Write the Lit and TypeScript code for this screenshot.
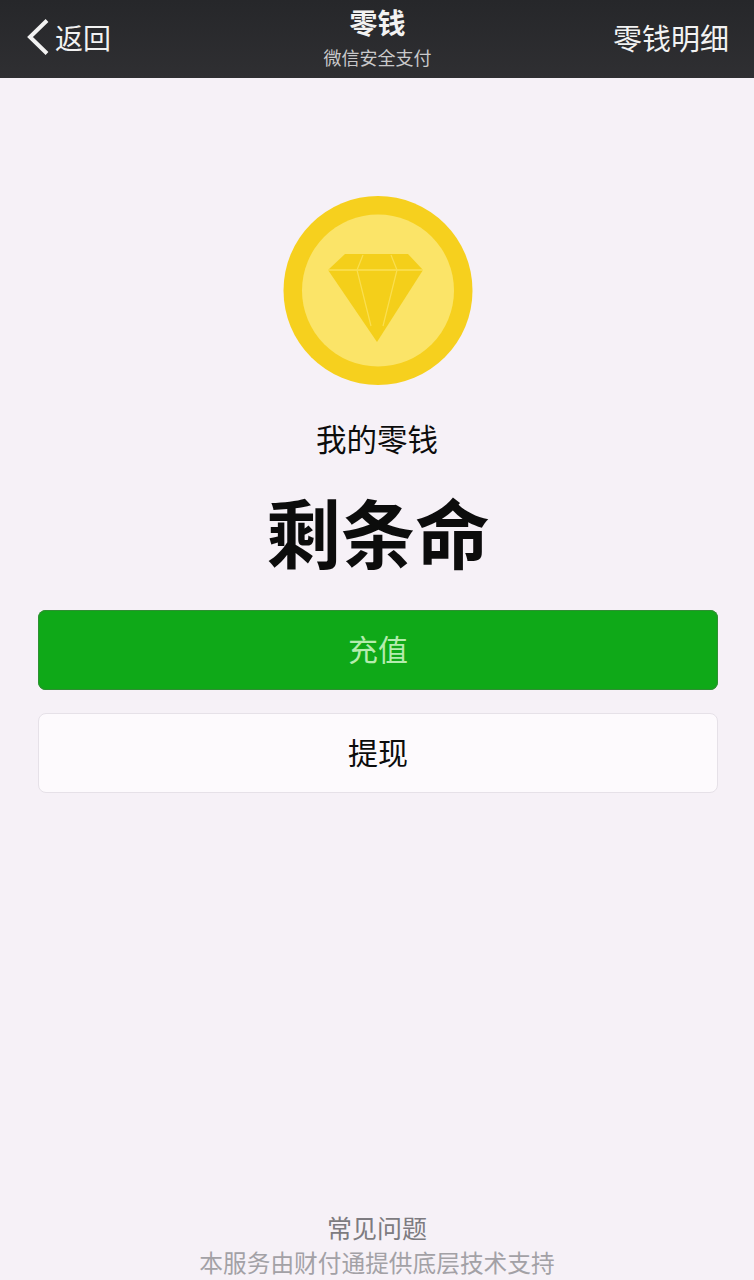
import { LitElement, css, html } from 'lit';
import { customElement } from 'lit/decorators.js';

@customElement('app-root')
export class AppRoot extends LitElement {
  static styles = css`
    :host {
      display: block;
      height: 1280px;
      overflow: hidden;
      background: #f6f1f7;
      font-family: "Noto Sans CJK SC", "Liberation Sans", sans-serif;
      color: #0c0c0c;
    }
    .page {
      height: 1280px;
      display: flex;
      flex-direction: column;
      align-items: center;
    }
    .nav {
      align-self: stretch;
      height: 78px;
      box-sizing: border-box;
      padding: 0 25px 4px 26px;
      background: linear-gradient(#26272a, #2f2f32);
      color: #f2f2f2;
      display: grid;
      grid-template-columns: 1fr auto 1fr;
      align-items: center;
    }
    .back {
      display: flex;
      align-items: center;
      gap: 5px;
      font-size: 28px;
      line-height: 40px;
    }
    .back svg {
      display: block;
      width: 24px;
      height: 38px;
    }
    .title {
      align-self: start;
      display: flex;
      flex-direction: column;
      align-items: center;
    }
    .title b {
      font-size: 28px;
      line-height: 34px;
      font-weight: 700;
      margin-top: 5px;
    }
    .title span {
      font-size: 18px;
      line-height: 24px;
      color: #c9c9cb;
      margin-top: 6px;
    }
    .detail {
      justify-self: end;
      font-size: 29px;
      line-height: 40px;
    }
    .coin {
      display: block;
      width: 192px;
      height: 192px;
      margin-top: 117px;
    }
    .label {
      font-size: 30.5px;
      line-height: 44px;
      margin-top: 29px;
    }
    .amount {
      font-size: 74.5px;
      line-height: 90px;
      font-weight: 700;
      margin-top: 26px;
      margin-left: 2px;
    }
    .btn {
      width: 680px;
      box-sizing: border-box;
      height: 80px;
      margin-left: 2px;
      padding-bottom: 4px;
      border-radius: 8px;
      display: flex;
      align-items: center;
      justify-content: center;
      font-size: 30px;
    }
    .primary {
      margin-top: 34px;
      background: #0fa918;
      color: #b4ecae;
      box-shadow: inset 0 0 0 1px #2f8f33;
    }
    .secondary {
      margin-top: 23px;
      background: #fdfafd;
      border: 1px solid #e6e1e8;
    }
    .footer {
      margin-top: auto;
      display: flex;
      flex-direction: column;
      align-items: center;
      height: 71px;
    }
    .faq {
      font-size: 25px;
      line-height: 36px;
      color: #7d7b80;
    }
    .support {
      font-size: 23.7px;
      line-height: 34px;
      color: #a3a1a6;
      white-space: nowrap;
    }
  `;

  render() {
    return html`
      <div class="page">
        <header class="nav">
          <div class="back">
            <svg viewBox="0 0 24 38" fill="none" stroke="#f2f2f2" stroke-width="4">
              <path d="M21 2.5 4 19l17 16.5" />
            </svg>
            <span>返回</span>
          </div>
          <div class="title">
            <b>零钱</b>
            <span>微信安全支付</span>
          </div>
          <div class="detail">零钱明细</div>
        </header>

        <svg class="coin" viewBox="0 0 192 192">
          <circle cx="97" cy="95.5" r="94.5" fill="#f6d01e" />
          <circle cx="97" cy="95.5" r="76" fill="#fbe468" />
          <path d="M64 59h63l15 16-46 72-49-72z" fill="#f4cf1a" />
          <path d="M47 75h95" stroke="#fbe156" stroke-width="1.5" fill="none" />
          <path d="M76 75l14 56M116 75l-14 56M82 60l-6 15M110 60l6 15" stroke="#fadf50" stroke-width="1.2" fill="none" />
        </svg>

        <div class="label">我的零钱</div>
        <div class="amount">剩条命</div>
        <div class="btn primary">充值</div>
        <div class="btn secondary">提现</div>

        <footer class="footer">
          <div class="faq">常见问题</div>
          <div class="support">本服务由财付通提供底层技术支持</div>
        </footer>
      </div>
    `;
  }
}
